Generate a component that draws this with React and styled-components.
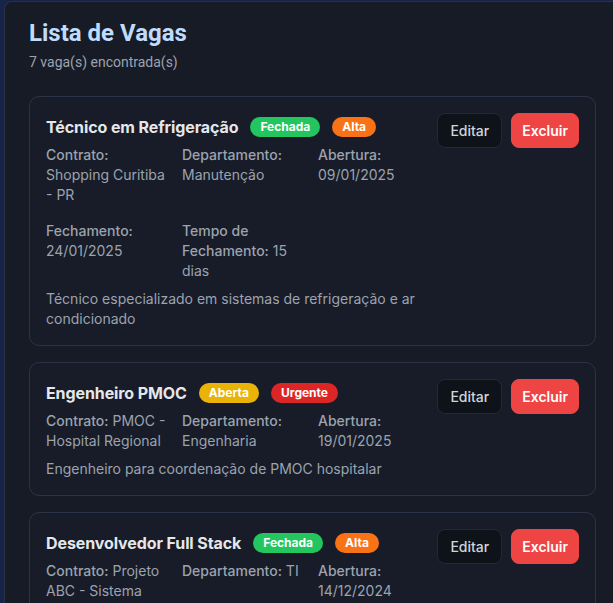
import React from 'react';
import styled, { createGlobalStyle } from 'styled-components';

const GlobalStyle = createGlobalStyle`
  html, body {
    margin: 0;
    padding: 0;
    overflow: hidden;
    background: #172449;
  }
  body {
    font-family: Inter, "Noto Sans", sans-serif;
  }
`;

const Page = styled.div`
  padding: 1px 0 0 4px;
  min-height: 100vh;
  box-sizing: border-box;
`;

const Panel = styled.section`
  width: 616px;
  box-sizing: border-box;
  background: #161b26;
  border: 1px solid #283042;
  border-right: none;
  border-radius: 8px 0 0 0;
  padding: 15px 24px 24px 24px;
  min-height: 700px;
`;

const Heading = styled.h1`
  margin: 0;
  font-family: Roboto, Inter, sans-serif;
  font-size: 24px;
  line-height: 32px;
  font-weight: 700;
  color: #bfdbfe;
`;

const Count = styled.p`
  margin: 3px 0 0 0;
  font-family: Roboto, Inter, sans-serif;
  font-size: 14px;
  line-height: 20px;
  color: #9ca3af;
`;

const List = styled.div`
  margin-top: 24px;
  display: flex;
  flex-direction: column;
  gap: 16px;
`;

const Card = styled.article`
  border: 1px solid #2b3446;
  border-radius: 10px;
  background: #171c28;
  padding: 16px;
  display: flex;
  align-items: flex-start;
`;

const Body = styled.div`
  flex: 1;
  min-width: 0;
`;

const TitleRow = styled.div`
  display: flex;
  align-items: center;
  gap: 12px;
  height: 28px;
  margin-bottom: 4px;
`;

const Title = styled.h3`
  margin: 0;
  font-size: 16px;
  font-weight: 700;
  letter-spacing: -0.1px;
  color: #e5e7eb;
  white-space: nowrap;
`;

const badgeColors = {
  Fechada: '#22c55e',
  Aberta: '#eab308',
  Alta: '#f97316',
  Urgente: '#dc2626',
};

const Badge = styled.span`
  background: ${(p) => badgeColors[p.$kind] || '#6b7280'};
  color: #ffffff;
  font-size: 12px;
  font-weight: 700;
  line-height: 16px;
  padding: 2px 10px;
  border-radius: 9999px;
`;

const Fields = styled.div`
  display: grid;
  grid-template-columns: repeat(3, 122px);
  column-gap: 14px;
  row-gap: 16px;
`;

const Field = styled.div`
  font-size: 14px;
  line-height: 20px;
  color: #9ca3af;
`;

const Label = styled.span`
  font-weight: 500;
`;

const Description = styled.p`
  margin: 8px 0 0 0;
  font-size: 14px;
  line-height: 20px;
  color: #9ca3af;
  max-width: 400px;
`;

const Actions = styled.div`
  display: flex;
  gap: 9px;
  flex-shrink: 0;
`;

const Button = styled.button`
  font-family: Inter, sans-serif;
  font-size: 14px;
  font-weight: ${(p) => (p.$danger ? 600 : 500)};
  height: 35px;
  padding: 0 ${(p) => (p.$danger ? '10px' : '12px')};
  border-radius: 8px;
  cursor: pointer;
  color: ${(p) => (p.$danger ? '#ffffff' : '#d1d5db')};
  background: ${(p) => (p.$danger ? '#ef4444' : '#0e1219')};
  border: 1px solid ${(p) => (p.$danger ? '#ef4444' : '#232a37')};
`;

const vagas = [
  {
    titulo: 'Técnico em Refrigeração',
    status: 'Fechada',
    prioridade: 'Alta',
    contrato: 'Shopping Curitiba - PR',
    departamento: 'Manutenção',
    abertura: '09/01/2025',
    fechamento: '24/01/2025',
    tempo: '15 dias',
    descricao: 'Técnico especializado em sistemas de refrigeração e ar condicionado',
  },
  {
    titulo: 'Engenheiro PMOC',
    status: 'Aberta',
    prioridade: 'Urgente',
    contrato: 'PMOC - Hospital Regional',
    departamento: 'Engenharia',
    abertura: '19/01/2025',
    descricao: 'Engenheiro para coordenação de PMOC hospitalar',
  },
  {
    titulo: 'Desenvolvedor Full Stack',
    status: 'Fechada',
    prioridade: 'Alta',
    contrato: 'Projeto ABC - Sistema Web',
    departamento: 'TI',
    abertura: '14/12/2024',
    fechamento: '10/01/2025',
    tempo: '27 dias',
    descricao: 'Desenvolvedor para manutenção e evolução de sistemas web',
  },
];

function VagaCard({ vaga }) {
  return (
    <Card>
      <Body>
        <TitleRow>
          <Title>{vaga.titulo}</Title>
          <Badge $kind={vaga.status}>{vaga.status}</Badge>
          <Badge $kind={vaga.prioridade}>{vaga.prioridade}</Badge>
        </TitleRow>
        <Fields>
          <Field><Label>Contrato:</Label> {vaga.contrato}</Field>
          <Field><Label>Departamento:</Label> {vaga.departamento}</Field>
          <Field><Label>Abertura:</Label> {vaga.abertura}</Field>
          {vaga.fechamento && (
            <Field><Label>Fechamento:</Label> {vaga.fechamento}</Field>
          )}
          {vaga.tempo && (
            <Field><Label>Tempo de Fechamento:</Label> {vaga.tempo}</Field>
          )}
        </Fields>
        <Description>{vaga.descricao}</Description>
      </Body>
      <Actions>
        <Button>Editar</Button>
        <Button $danger>Excluir</Button>
      </Actions>
    </Card>
  );
}

export default function App() {
  return (
    <>
      <GlobalStyle />
      <Page>
        <Panel>
          <Heading>Lista de Vagas</Heading>
          <Count>7 vaga(s) encontrada(s)</Count>
          <List>
            {vagas.map((v) => (
              <VagaCard key={v.titulo} vaga={v} />
            ))}
          </List>
        </Panel>
      </Page>
    </>
  );
}
